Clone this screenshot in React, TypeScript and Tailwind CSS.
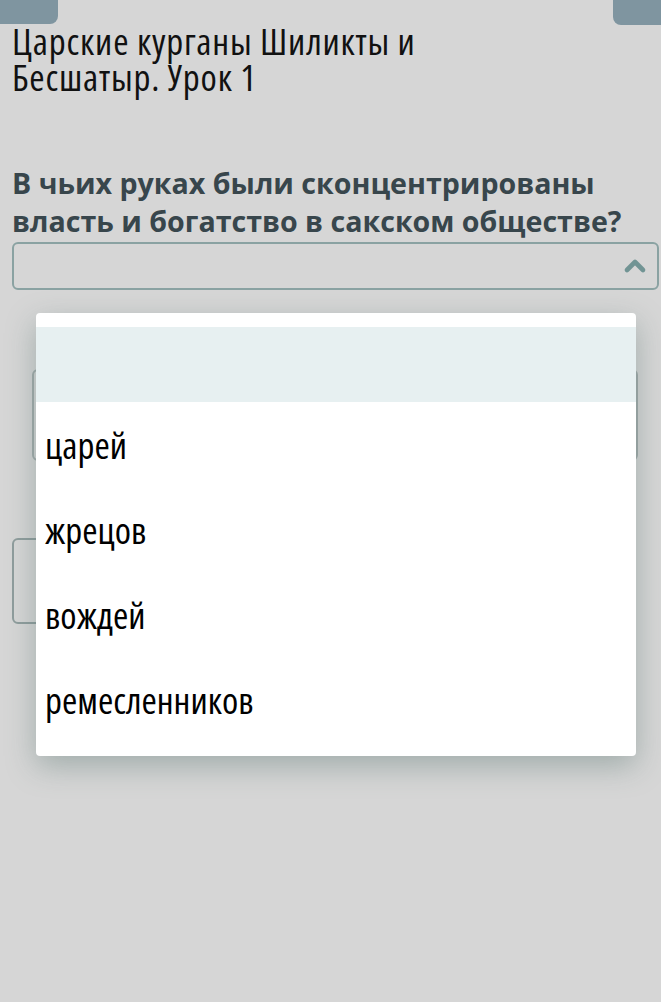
import { ChevronUp } from 'lucide-react'

const options = ['царей', 'жрецов', 'вождей', 'ремесленников']

const font = { fontFamily: '"Open Sans", "Noto Sans", sans-serif' }

export default function App() {
  return (
    <div className="relative min-h-[1002px] w-[661px] overflow-hidden bg-[#d6d6d6]" style={font}>
      {/* top tabs */}
      <div className="flex justify-between">
        <div className="h-[24px] w-[58px] rounded-br-[8px] bg-[#7f95a0]" />
        <div className="h-[25px] w-[48px] rounded-bl-[8px] bg-[#7f95a0]" />
      </div>

      <h1 className="mt-[-2px] max-w-[500px] px-[12px] text-[37px] leading-[36px] tracking-[0.8px] font-normal text-[#111] [font-stretch:80%]">
        Царские курганы Шиликты и Бесшатыр. Урок 1
      </h1>

      <h2 className="mt-[69px] px-[12px] text-[28.6px] leading-[38px] font-bold text-[#38464c]">
        В чьих руках были сконцентрированы власть и богатство в сакском обществе?
      </h2>

      <div className="ml-[12px] mr-[2px] mt-[2px] flex h-[48px] items-center justify-end rounded-[6px] border-2 border-[#8aa2a2] pr-[6px]">
        <ChevronUp className="h-[32px] w-[32px] text-[#719494]" strokeWidth={3.5} />
      </div>

      {/* content behind the open list */}
      <div className="ml-[32px] mr-[23px] mt-[79px] h-[92px] rounded-[6px] border-2 border-[#a3abab]" />
      <div className="ml-[12px] mr-[50px] mt-[77px] h-[86px] rounded-[6px] border-2 border-[#8f9d9d]" />

      {/* open list */}
      <div className="absolute left-[36px] top-[313px] w-[600px] rounded-[4px] bg-white py-[14px] shadow-[0_10px_30px_rgba(80,110,105,0.4)]">
        <div className="h-[75px] bg-[#e7f0f1]" />
        {options.map((o) => (
          <div key={o} className="flex h-[85px] items-center px-[9px] text-[37px] text-black [font-stretch:83%]">
            {o}
          </div>
        ))}
      </div>
    </div>
  )
}
